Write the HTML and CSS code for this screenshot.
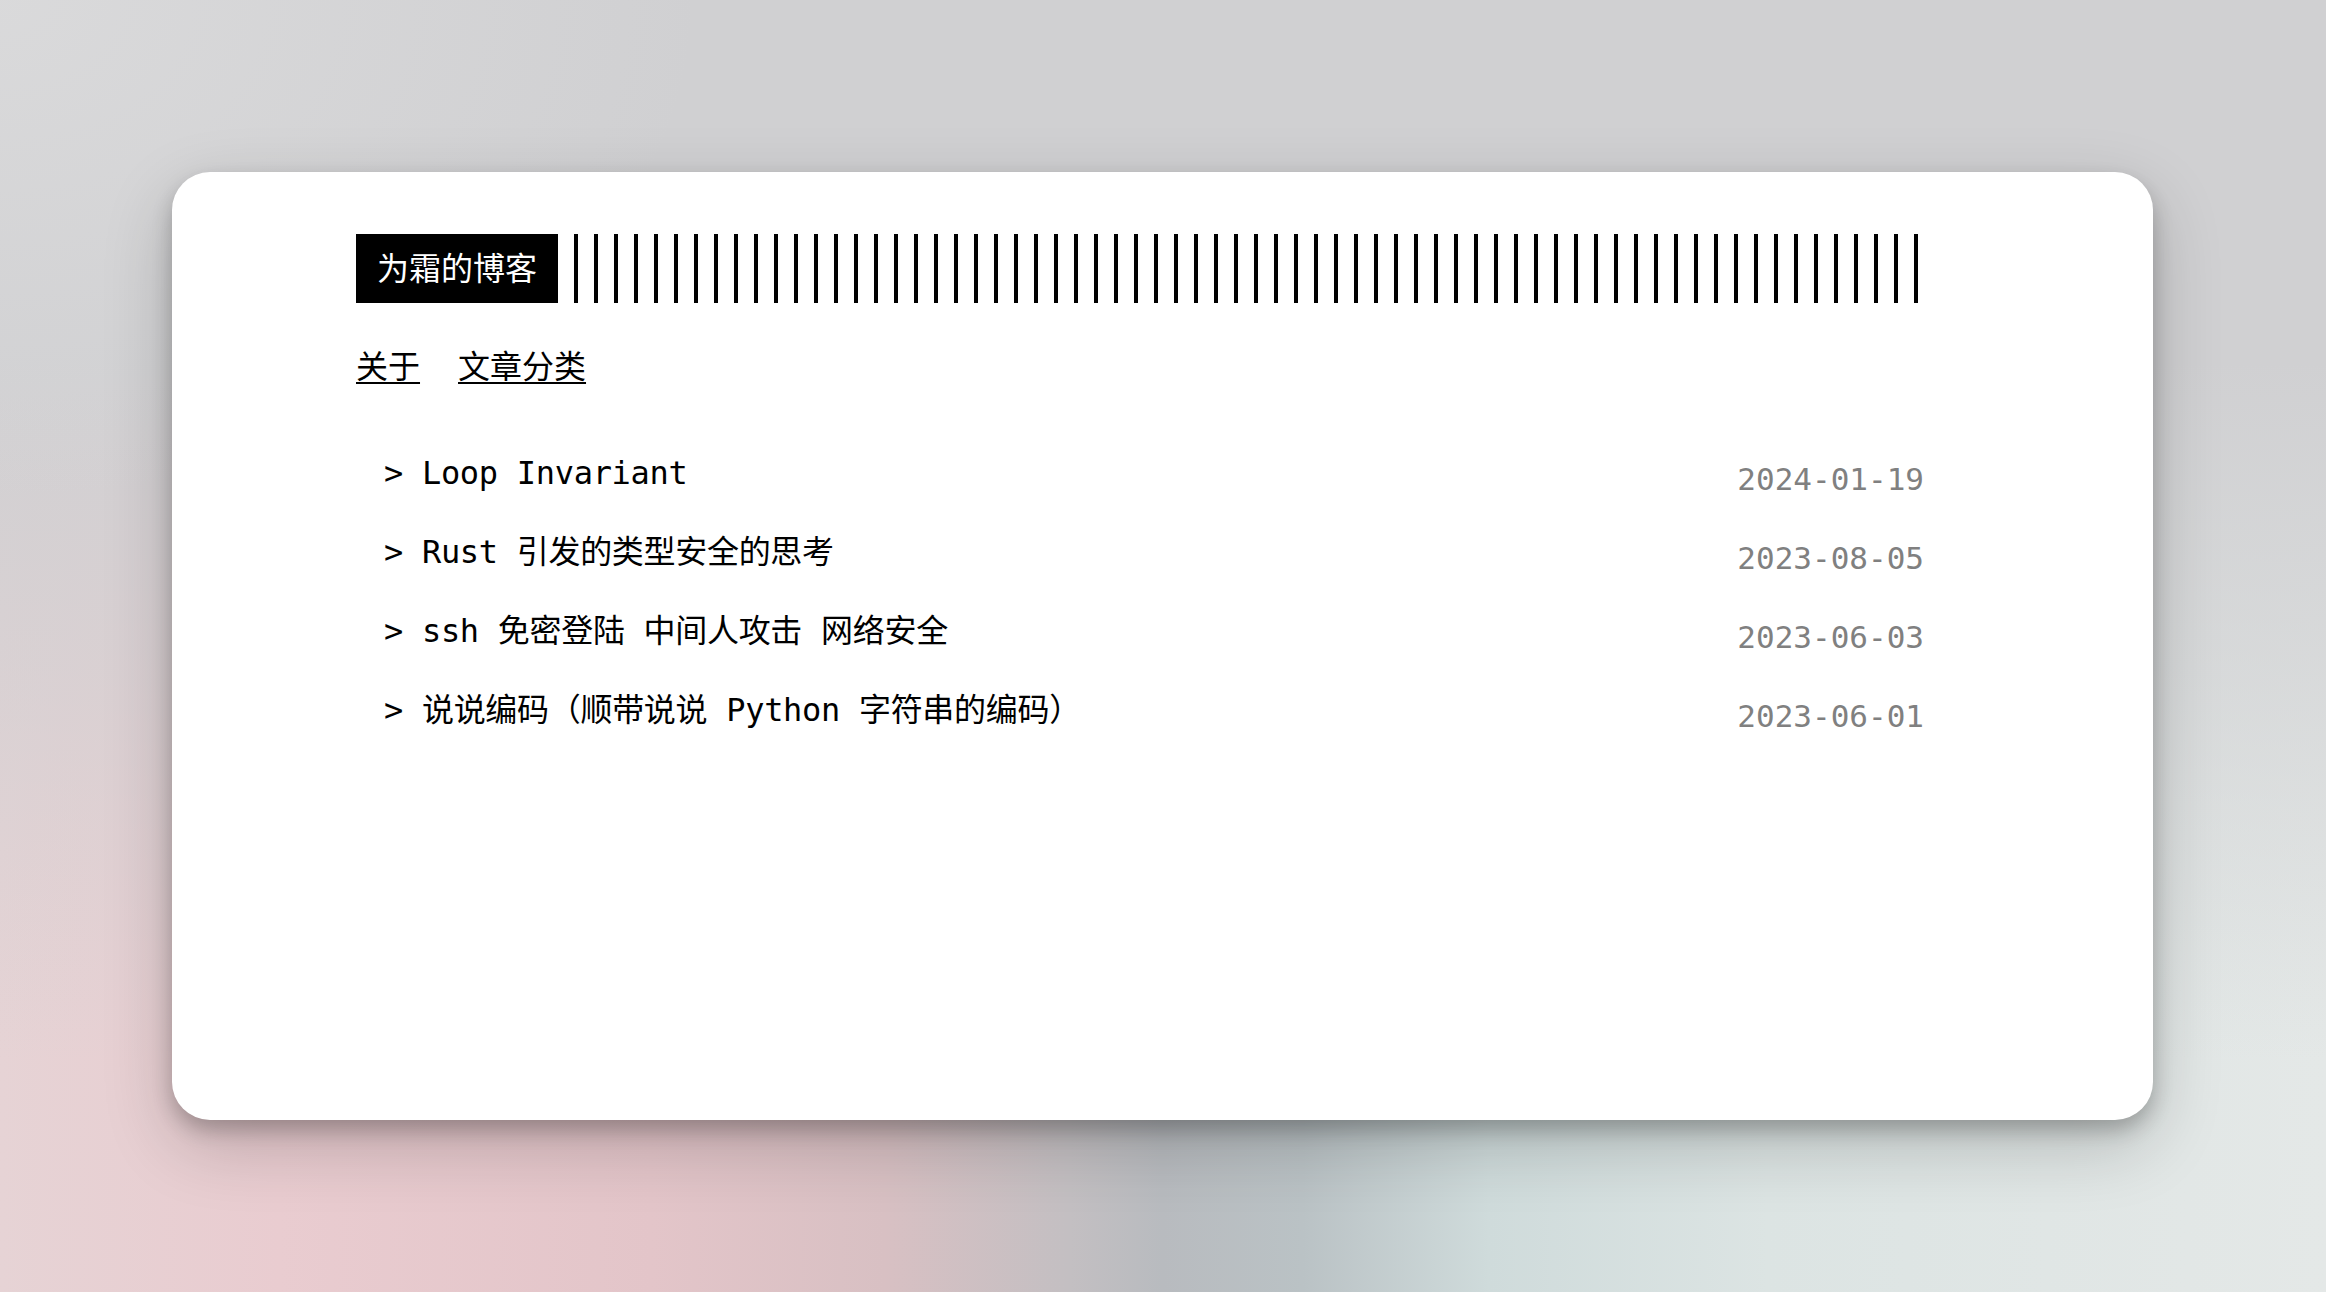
FILE: index.html
```html
<!DOCTYPE html>
<html lang="zh-CN">
<head>
<meta charset="utf-8">
<title>为霜的博客</title>
<link rel="stylesheet" href="styles.css">
</head>
<body>
<main class="card">
  <header class="masthead">
    <div class="brand">为霜的博客</div>
    <div class="stripes"></div>
  </header>
  <nav class="nav">
    <a class="nav-link" href="#">关于</a>
    <a class="nav-link" href="#">文章分类</a>
  </nav>
  <ul class="posts">
    <li class="post"><a class="post-title" href="#"><span class="caret">&gt;</span> Loop Invariant</a><time class="post-date">2024-01-19</time></li>
    <li class="post"><a class="post-title" href="#"><span class="caret">&gt;</span> Rust 引发的类型安全的思考</a><time class="post-date">2023-08-05</time></li>
    <li class="post"><a class="post-title" href="#"><span class="caret">&gt;</span> ssh 免密登陆 中间人攻击 网络安全</a><time class="post-date">2023-06-03</time></li>
    <li class="post"><a class="post-title" href="#"><span class="caret">&gt;</span> 说说编码（顺带说说 Python 字符串的编码）</a><time class="post-date">2023-06-01</time></li>
  </ul>
</main>
</body>
</html>
```

FILE: styles.css
```css
html, body {
  margin: 0;
  height: 100%;
}

body {
  box-sizing: border-box;
  padding: 172px 173px 0 172px;
  font-family: "Noto Sans CJK SC", "Noto Sans", sans-serif;
  color: #000;
  background-color: #d1d1d3;
  background-image:
    radial-gradient(ellipse 700px 500px at 0% 0%, rgba(220, 220, 221, 0.8) 0%, rgba(220, 220, 221, 0) 100%),
    linear-gradient(180deg, rgba(208, 208, 210, 1) 0%, rgba(208, 208, 210, 1) 28%, rgba(208, 208, 210, 0.6) 52%, rgba(208, 208, 210, 0) 82%),
    linear-gradient(90deg, #e6d3d5 0%, #e9ccd0 12%, #e3c5c9 28%, #d8c0c3 38%, #c3bfc2 46%, #b8bbbf 50%, #bac2c5 56%, #cfdbdb 64%, #dce4e3 76%, #e4e8e7 100%);
  overflow: hidden;
}

.card {
  box-sizing: border-box;
  width: 1981px;
  height: 948px;
  padding: 62px 229px 0 184px;
  background: #fff;
  border-radius: 38px;
  box-shadow: 0 10px 20px rgba(0, 0, 0, 0.22), 0 24px 70px rgba(0, 0, 0, 0.2);
}

.masthead {
  display: flex;
  height: 69px;
}

.brand {
  padding: 0 21px;
  background: #000;
  color: #fff;
  font-size: 32px;
  line-height: 65px;
  white-space: nowrap;
}

.stripes {
  flex: 1;
  background-image: repeating-linear-gradient(to right, transparent 0, transparent 16px, #000 16px, #000 20px);
}

.nav {
  display: flex;
  gap: 38px;
  margin-top: 37px;
  font-size: 32px;
  line-height: 48px;
}

.nav-link {
  color: #000;
  text-decoration: underline;
  text-decoration-thickness: 2px;
  text-underline-offset: 4px;
}

.posts {
  list-style: none;
  margin: 61px 0 0;
  padding: 0 0 0 28px;
  display: flex;
  flex-direction: column;
  gap: 25px;
  font-family: "DejaVu Sans Mono", "Noto Sans CJK SC", monospace;
  font-size: 32px;
  letter-spacing: -0.3px;
  line-height: 48px;
}

.post {
  display: flex;
  justify-content: space-between;
  align-items: flex-start;
}

.post-title {
  color: #000;
  text-decoration: none;
  white-space: pre;
}

.post-date {
  padding-top: 6px;
  font-size: 31px;
  letter-spacing: 0;
  color: #808080;
}
```
